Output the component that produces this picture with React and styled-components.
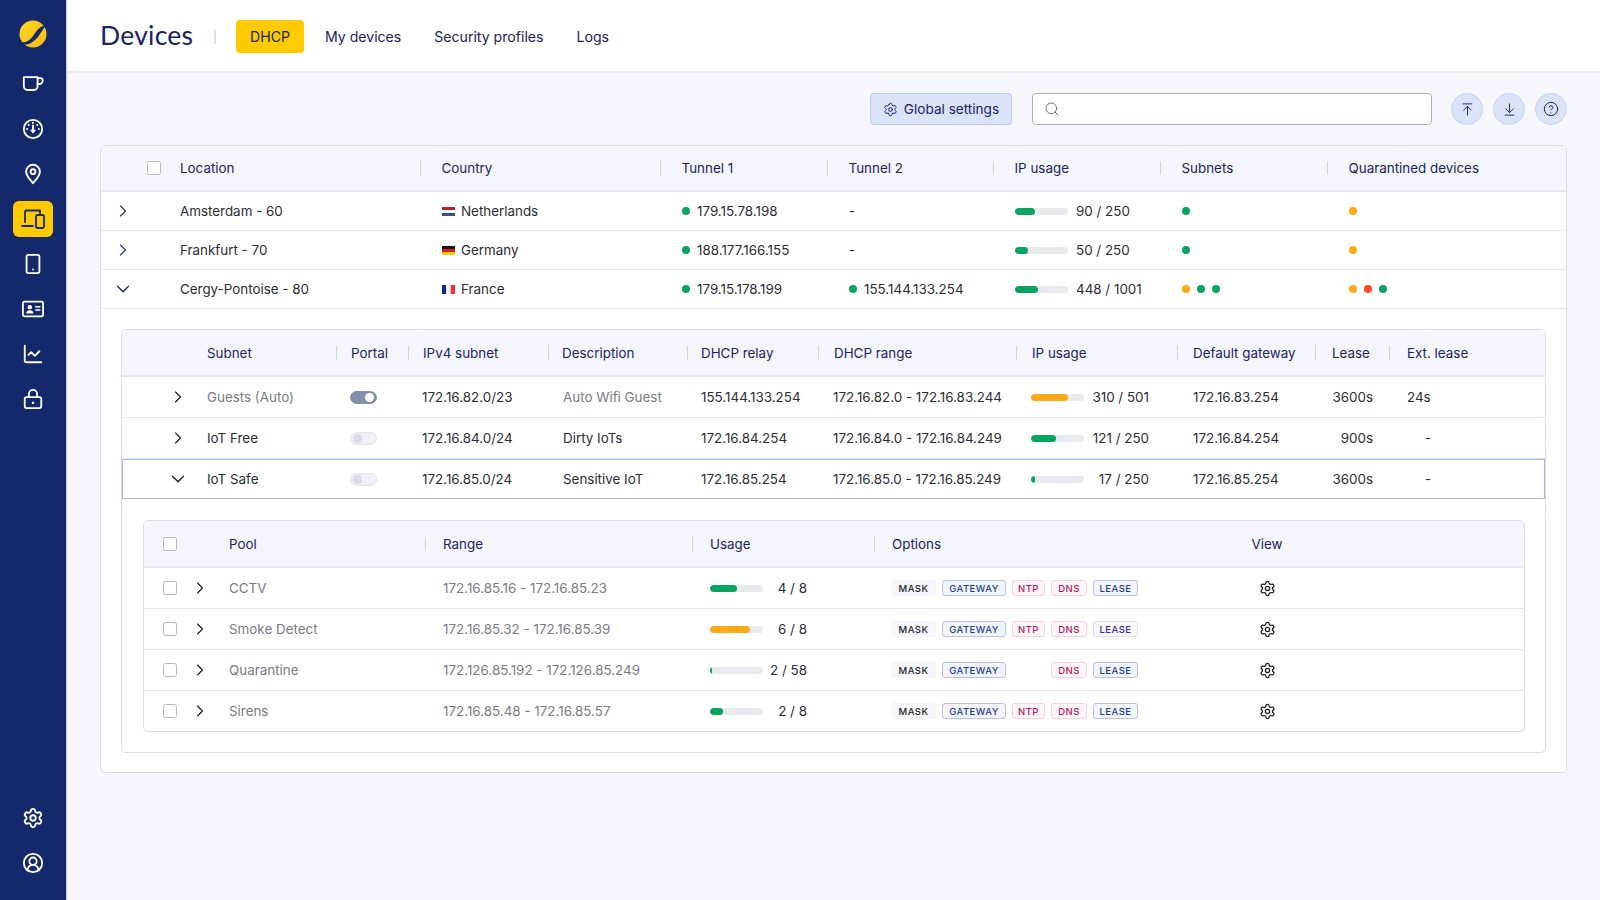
import React from 'react';
import styled, { createGlobalStyle } from 'styled-components';
import {
  Smartphone, ChartLine, Settings, CircleUserRound, Search,
  ArrowUpToLine, ArrowDownToLine, CircleHelp, ChevronRight, ChevronDown,
} from 'lucide-react';

const Global = createGlobalStyle`
  html, body { margin: 0; padding: 0; height: 100%; background: #f6f7fd; }
  body { font-family: Inter, "Liberation Sans", sans-serif; color: #2b2c36; overflow: hidden; }
  * { box-sizing: border-box; }
`;

const Page = styled.div`display: flex; width: 1600px; height: 900px;`;
const Sidebar = styled.aside`
  width: 67px; flex: none; background: #13296b; border-right: 1px solid #c4cbe6;
  display: flex; flex-direction: column; align-items: center; padding: 20px 0 15px;
`;
const Logo = styled.svg`width: 28px; height: 28px; flex: none; margin-bottom: 13px;`;
const NavItem = styled.div`
  width: 40px; height: 45px; display: flex; align-items: center; justify-content: center;
  color: ${p => (p.$active ? '#13296b' : '#fff')}; position: relative; z-index: 0;
  ${p => p.$active && `
    &::before { content: ''; position: absolute; z-index: -1; inset: 5px 0 4px; background: #ffcb00; border-radius: 6px; }
  `}
`;
const Spacer = styled.div`flex: 1;`;
const Main = styled.main`flex: 1; min-width: 0; display: flex; flex-direction: column;`;
const Header = styled.header`
  height: 73px; flex: none; background: #fff; border-bottom: 2px solid #eaecf4;
  display: flex; align-items: center; padding: 2px 0 0 33px;
`;
const Title = styled.h1`
  margin: 0 0 2px; font: 400 26.5px/1 Lato, sans-serif; color: #1a2263; width: 114px; letter-spacing: .25px;
`;
const HeadDivider = styled.span`width: 2px; height: 14px; background: #dfe1ea; margin-right: 20px;`;
const Tabs = styled.nav`display: flex; gap: 7px;`;
const Tab = styled.a`
  height: 33px; display: flex; align-items: center; border-radius: 4px;
  padding: 0 ${p => (p.$active ? 14 : 13)}px; margin-right: ${p => (p.$active ? 1 : 0)}px;
  font-size: 14.1px; color: #1a2263;
  background: ${p => (p.$active ? '#ffcb00' : 'transparent')};
`;
const Content = styled.div`padding: 20px 33px 0 33px;`;
const Toolbar = styled.div`display: flex; justify-content: flex-end; align-items: center; height: 32px; margin-bottom: 20px;`;
const SettingsButton = styled.button`
  width: 142px; height: 32px; border: 1px solid #bcc9f0; border-radius: 4px; background: #dbe3f9;
  display: flex; align-items: center; justify-content: center; gap: 6px; font: 400 13.6px Inter, sans-serif; color: #1a2263;
  padding: 0; margin-right: 20px;
`;
const SearchBox = styled.div`
  width: 400px; height: 32px; border: 1px solid #a9aec2; border-radius: 4px; background: #fff;
  display: flex; align-items: center; padding-left: 11px; color: #6c7186; margin-right: 19px;
`;
const RoundGroup = styled.div`display: flex; gap: 10px;`;
const RoundButton = styled.button`
  width: 32px; height: 32px; border-radius: 50%; border: 1px solid #c5d0f1; background: #dbe3f9;
  display: flex; align-items: center; justify-content: center; color: #1a2263; padding: 0;
`;
const Table = styled.section`
  border: 1px solid #d9ddee; border-radius: 5px; overflow: hidden; background: #fff;
`;
const Row = styled.div`
  display: grid; grid-template-columns: ${p => p.$cols}; align-items: center;
  height: ${p => p.$h}px; border-bottom: ${p => (p.$last ? 0 : 1)}px solid #e4e6f1;
  ${p => p.$selected && 'box-shadow: inset 0 0 0 1px #a3b5f0; border-bottom: 0;'}
`;
const HeadRow = styled(Row)`background: #f5f6fd; border-bottom: 2px solid #e6e8f3;`;
const HeadCell = styled.div`
  display: flex; align-items: center; gap: ${p => p.$gap}px; font-size: 13.4px; color: #1a2263; white-space: nowrap;
  ${p => p.$center && 'justify-content: center;'}
  ${p => p.$lead && `padding-left: ${p.$lead}px;`}
`;
const ColDivider = styled.span`width: 1px; height: 14px; background: #cfd2df; flex: none;`;
const Cell = styled.div`
  padding-left: ${p => p.$pad}px; font-size: 13.4px; white-space: nowrap; display: flex; align-items: center;
  color: ${p => (p.$muted ? '#797b86' : '#2b2c36')};
  ${p => p.$right && `justify-content: flex-end; padding-left: 0; padding-right: ${p.$right}px;`}
  ${p => p.$center && 'justify-content: center; padding-left: 0;'}
`;
const Check = styled.span`
  width: 14px; height: 14px; flex: none; border: 1px solid ${p => (p.$soft ? '#b4b6c6' : '#b6b9d0')}; border-radius: 2.5px; background: #fff;
`;
const Dot = styled.span`
  width: 8px; height: 8px; border-radius: 50%; flex: none;
  background: ${p => ({ g: '#07a55f', o: '#ffa914', r: '#ff4a1f' }[p.$c])};
`;
const Dots = styled.div`display: flex; gap: 7px; align-items: center;`;
const Tunnel = styled.div`display: flex; gap: 7px; align-items: center;`;
const Usage = styled.div`display: flex; align-items: center;`;
const Track = styled.div`width: 53px; height: 7px; border-radius: 4px; background: #e8eaf0; overflow: hidden; flex: none;`;
const Fill = styled.div`height: 100%; border-radius: 4px; background: ${p => (p.$c === 'o' ? '#ffa914' : '#07a55f')};`;
const UsageText = styled.span`
  width: ${p => p.$w}px; margin-left: ${p => p.$ml}px; ${p => p.$end && 'text-align: right;'} flex: none;
`;
const CountryWrap = styled.div`display: flex; align-items: center; gap: 6px;`;
const Expanded = styled.div`padding: 20px 20px 19px;`;
const Nested = styled.div`
  border: 1px solid #d9ddee; border-radius: 5px; overflow: hidden; background: #fff;
`;
const Toggle = styled.span`
  width: 27px; height: 13px; border-radius: 7px; display: flex; align-items: center; padding: 0 2px;
  background: ${p => (p.$on ? '#8490ab' : '#eff0f5')};
  border: 1px solid ${p => (p.$on ? '#8490ab' : '#e2e4ec')};
  justify-content: ${p => (p.$on ? 'flex-end' : 'flex-start')};
`;
const Knob = styled.span`
  width: 9px; height: 9px; border-radius: 50%; background: ${p => (p.$on ? '#fff' : '#d6d9e6')};
`;
const PoolPad = styled.div`padding: 21px 20px 20px 21px;`;
const PoolLead = styled.div`display: flex; align-items: center; padding-left: 19px; gap: 13px;`;
const Badges = styled.div`display: flex; gap: 6px; padding-left: 17px; align-items: center;`;
const Badge = styled.span`
  height: 16px; display: flex; align-items: center; justify-content: center; border-radius: 3px;
  width: ${p => p.$w}px; font-size: 9.5px; font-weight: 500; letter-spacing: .45px;
  visibility: ${p => (p.$hidden ? 'hidden' : 'visible')};
  background: ${p => ({ mask: '#f6f6fb', blue: '#f3f5fd', pink: '#fff6fa', violet: '#f9f8ff' }[p.$k])};
  color: ${p => ({ mask: '#24242e', blue: '#1d3a9c', pink: '#b3145f', violet: '#3a20c4' }[p.$k])};
  border: 1px solid ${p => ({ mask: '#f3f3f9', blue: '#b6c3f0', pink: '#fbd0e3', violet: '#dfdcf8' }[p.$k])};
`;

const Cup = () => (
  <svg width="22" height="22" viewBox="0 0 24 24" fill="none" stroke="currentColor" strokeWidth="2" strokeLinejoin="round" strokeLinecap="round">
    <path d="M2 4.500h15v10a4 4 0 0 1-4 4H6a4 4 0 0 1-4-4z" />
    <path d="M17 5.500h3a2.500 2.500 0 0 1 2.500 2.500v.5a3.500 3.500 0 0 1-3.500 3.500h-2" />
  </svg>
);
const Gauge = () => (
  <svg width="22" height="22" viewBox="0 0 24 24" fill="none" stroke="currentColor" strokeWidth="2" strokeLinecap="round">
    <circle cx="12" cy="12" r="10" />
    <path d="M12 8v7" />
    <path d="M9.800 13.500 12 16.500l2.200-3z" fill="currentColor" strokeWidth="1" />
    <path d="M12 5.200v.01M7.400 7.600v.01M16.600 7.600v.01M5.600 12v.01M18.400 12v.01" strokeWidth="2.200" />
  </svg>
);
const Pin = () => (
  <svg width="22" height="22" viewBox="0 0 24 24" fill="none" stroke="currentColor" strokeWidth="2.100" strokeLinejoin="round">
    <path d="M12 22C9 18.500 4.500 14 4.500 9.500a7.500 7.500 0 0 1 15 0C19.500 14 15 18.500 12 22z" />
    <circle cx="12" cy="9.500" r="2.600" />
  </svg>
);
const Devices = () => (
  <svg width="24" height="24" viewBox="0 0 24 24" fill="none" stroke="currentColor" strokeWidth="1.800" strokeLinecap="round" strokeLinejoin="round">
    <path d="M4 15V5a1.500 1.500 0 0 1 1.500-1.500H19v3" />
    <path d="M1 19h11" />
    <rect x="15" y="8" width="8" height="13" rx="1.500" />
  </svg>
);
const IdCard = () => (
  <svg width="22" height="22" viewBox="0 0 24 24" fill="none" stroke="currentColor" strokeWidth="2" strokeLinecap="round">
    <rect x="1" y="4" width="22" height="16" rx="2" />
    <circle cx="8.500" cy="10" r="2.400" fill="currentColor" stroke="none" />
    <path d="M4.600 17c0-2.500 1.700-3.600 3.900-3.600s3.900 1.100 3.900 3.600z" fill="currentColor" stroke="none" />
    <path d="M15 9.500h4.500M15 13h4.500" strokeWidth="1.700" />
  </svg>
);
const LockIcon = () => (
  <svg width="22" height="22" viewBox="0 0 24 24" fill="none" stroke="currentColor" strokeWidth="2" strokeLinejoin="round">
    <rect x="3" y="10" width="18" height="12" rx="2" />
    <path d="M7.500 10V6.500a4.500 4.500 0 0 1 9 0V10" />
    <path d="M12 15v2.500" strokeWidth="2.400" />
  </svg>
);
const Flag = ({ c }) => {
  const v = c === 'fr';
  const colors = { nl: ['#b3232e', '#fff', '#2f4f96'], de: ['#111', '#d8201f', '#ffcc00'], fr: ['#12288c', '#fff', '#f5303f'] }[c];
  return (
    <svg width="13" height="9" viewBox="0 0 13 9" style={{ flex: 'none' }}>
      {colors.map((col, i) => v
        ? <rect key={i} x={(i * 13) / 3} y="0" width={13 / 3} height="9" fill={col} />
        : <rect key={i} x="0" y={i * 3} width="13" height="3" fill={col} />)}
    </svg>
  );
};
const Chev = ({ open, color }) => (open
  ? <ChevronDown size={22} strokeWidth={1.4} color={color} />
  : <ChevronRight size={20} strokeWidth={1.4} color={color} />);
const Bar = ({ pct, c }) => (
  <Track><Fill $c={c} style={{ width: `${pct}%` }} /></Track>
);

const MAIN = '79px 240px 240px 167px 166px 167px 167px 1fr';
const SUB = '85px 129px 72px 140px 139px 131px 198px 161px 138px 74px 1fr';
const POOL = '85px 196px 267px 182px 360px 66px 1fr';

const mainHead = ['Location', 'Country', 'Tunnel 1', 'Tunnel 2', 'IP usage', 'Subnets', 'Quarantined devices'];
const subHead = ['Subnet', 'Portal', 'IPv4 subnet', 'Description', 'DHCP relay', 'DHCP range', 'IP usage', 'Default gateway', 'Lease', 'Ext. lease'];
const subGaps = [0, 14, 14, 13, 13, 15, 15, 15, 16, 17];
const locations = [
  { name: 'Amsterdam - 60', flag: 'nl', country: 'Netherlands', t1: '179.15.78.198', t2: null, pct: 37, use: '90 / 250', subs: ['g'], q: ['o'], chev: '#2a2f7a' },
  { name: 'Frankfurt - 70', flag: 'de', country: 'Germany', t1: '188.177.166.155', t2: null, pct: 24, use: '50 / 250', subs: ['g'], q: ['o'], chev: '#1f3f8f' },
  { name: 'Cergy-Pontoise - 80', flag: 'fr', country: 'France', t1: '179.15.178.199', t2: '155.144.133.254', pct: 44, use: '448 / 1001', subs: ['o', 'g', 'g'], q: ['o', 'r', 'g'], open: true, chev: '#1a2263' },
];
const subnets = [
  { name: 'Guests (Auto)', muted: true, on: true, ip: '172.16.82.0/23', desc: 'Auto Wifi Guest', descMuted: true, relay: '155.144.133.254', range: '172.16.82.0 - 172.16.83.244', pct: 70, c: 'o', use: '310 / 501', gw: '172.16.83.254', lease: '3600s', ext: '24s' },
  { name: 'IoT Free', ip: '172.16.84.0/24', desc: 'Dirty IoTs', relay: '172.16.84.254', range: '172.16.84.0 - 172.16.84.249', pct: 48, c: 'g', use: '121 / 250', gw: '172.16.84.254', lease: '900s', ext: '-' },
  { name: 'IoT Safe', selected: true, open: true, ip: '172.16.85.0/24', desc: 'Sensitive IoT', relay: '172.16.85.254', range: '172.16.85.0 - 172.16.85.249', pct: 7, c: 'g', use: '17 / 250', gw: '172.16.85.254', lease: '3600s', ext: '-' },
];
const pools = [
  { name: 'CCTV', range: '172.16.85.16 - 172.16.85.23', pct: 50, c: 'g', use: '4 / 8', lease: 'blue' },
  { name: 'Smoke Detect', range: '172.16.85.32 - 172.16.85.39', pct: 75, c: 'o', use: '6 / 8', lease: 'violet' },
  { name: 'Quarantine', range: '172.126.85.192 - 172.126.85.249', pct: 4, c: 'g', use: '2 / 58', lease: 'blue', noNtp: true },
  { name: 'Sirens', range: '172.16.85.48 - 172.16.85.57', pct: 25, c: 'g', use: '2 / 8', lease: 'blue' },
];

export default function App() {
  return (
    <>
      <Global />
      <Page>
        <Sidebar>
          <Logo viewBox="0 0 28 28">
            <defs>
              <linearGradient id="logoFill" x1="0" y1="0" x2="1" y2="1">
                <stop offset="0" stopColor="#ffd725" />
                <stop offset="1" stopColor="#fbbb0c" />
              </linearGradient>
            </defs>
            <circle cx="14" cy="14" r="13.500" fill="url(#logoFill)" />
            <path d="M2.500 22.500C8.500 22.500 12 19 15 14.500 18 10 21.500 6 27 5 24.500 8.500 22 12.500 19 17 15 22 9 25.500 4 24.500z" fill="#13296b" />
          </Logo>
          <NavItem><Cup /></NavItem>
          <NavItem><Gauge /></NavItem>
          <NavItem><Pin /></NavItem>
          <NavItem $active><Devices /></NavItem>
          <NavItem><Smartphone size={22} strokeWidth={2} /></NavItem>
          <NavItem><IdCard /></NavItem>
          <NavItem><ChartLine size={22} strokeWidth={2} /></NavItem>
          <NavItem><LockIcon /></NavItem>
          <Spacer />
          <NavItem><Settings size={22} strokeWidth={2} /></NavItem>
          <NavItem><CircleUserRound size={22} strokeWidth={2} /></NavItem>
        </Sidebar>
        <Main>
          <Header>
            <Title>Devices</Title>
            <HeadDivider />
            <Tabs>
              <Tab $active>DHCP</Tab>
              <Tab>My devices</Tab>
              <Tab>Security profiles</Tab>
              <Tab>Logs</Tab>
            </Tabs>
          </Header>
          <Content>
            <Toolbar>
              <SettingsButton><Settings size={15} strokeWidth={1.6} />Global settings</SettingsButton>
              <SearchBox><Search size={16} strokeWidth={1.5} /></SearchBox>
              <RoundGroup>
                <RoundButton><ArrowUpToLine size={15} strokeWidth={1.5} /></RoundButton>
                <RoundButton><ArrowDownToLine size={15} strokeWidth={1.5} /></RoundButton>
                <RoundButton><CircleHelp size={16} strokeWidth={1.5} /></RoundButton>
              </RoundGroup>
            </Toolbar>
            <Table>
              <HeadRow $cols={MAIN} $h={46}>
                <HeadCell $lead={46}><Check /></HeadCell>
                {mainHead.map((h, i) => (
                  <HeadCell key={h} $gap={20.5}>{i > 0 && <ColDivider />}{h}</HeadCell>
                ))}
              </HeadRow>
              {locations.map(l => (
                <Row key={l.name} $cols={MAIN} $h={39}>
                  <Cell $pad={l.open ? 11 : 12}><Chev open={l.open} color={l.chev} /></Cell>
                  <Cell $pad={0}>{l.name}</Cell>
                  <Cell $pad={22}><CountryWrap><Flag c={l.flag} />{l.country}</CountryWrap></Cell>
                  <Cell $pad={22}><Tunnel><Dot $c="g" />{l.t1}</Tunnel></Cell>
                  <Cell $pad={22}>{l.t2 ? <Tunnel><Dot $c="g" />{l.t2}</Tunnel> : '-'}</Cell>
                  <Cell $pad={22}><Usage><Bar pct={l.pct} /><UsageText $ml={8} $w={80}>{l.use}</UsageText></Usage></Cell>
                  <Cell $pad={22}><Dots>{l.subs.map((c, i) => <Dot key={i} $c={c} />)}</Dots></Cell>
                  <Cell $pad={22}><Dots>{l.q.map((c, i) => <Dot key={i} $c={c} />)}</Dots></Cell>
                </Row>
              ))}
              <Expanded>
                <Nested>
                  <HeadRow $cols={SUB} $h={47}>
                    <div />
                    {subHead.map((h, i) => (
                      <HeadCell key={h} $gap={subGaps[i]}>{i > 0 && <ColDivider />}{h}</HeadCell>
                    ))}
                  </HeadRow>
                  {subnets.map(s => (
                    <Row key={s.name} $cols={SUB} $h={s.selected ? 40 : 41} $selected={s.selected}>
                      <Cell $pad={s.open ? 45 : 46}><Chev open={s.open} color="#1c1c24" /></Cell>
                      <Cell $pad={0} $muted={s.muted}>{s.name}</Cell>
                      <Cell $pad={14}><Toggle $on={s.on}><Knob $on={s.on} /></Toggle></Cell>
                      <Cell $pad={14}>{s.ip}</Cell>
                      <Cell $pad={15} $muted={s.descMuted}>{s.desc}</Cell>
                      <Cell $pad={14}>{s.relay}</Cell>
                      <Cell $pad={15}>{s.range}</Cell>
                      <Cell $pad={15}><Usage><Bar pct={s.pct} c={s.c} /><UsageText $ml={6} $w={59} $end>{s.use}</UsageText></Usage></Cell>
                      <Cell $pad={16}>{s.gw}</Cell>
                      <Cell $right={16}>{s.lease}</Cell>
                      <Cell $pad={s.ext === '-' ? 36 : 18}>{s.ext}</Cell>
                    </Row>
                  ))}
                  <PoolPad>
                    <Nested>
                      <HeadRow $cols={POOL} $h={47}>
                        <PoolLead><Check $soft /></PoolLead>
                        <HeadCell>Pool</HeadCell>
                        <HeadCell $gap={17}><ColDivider />Range</HeadCell>
                        <HeadCell $gap={17}><ColDivider />Usage</HeadCell>
                        <HeadCell $gap={17}><ColDivider />Options</HeadCell>
                        <HeadCell $center>View</HeadCell>
                        <div />
                      </HeadRow>
                      {pools.map((p, i) => {
                        const last = i === pools.length - 1;
                        return (
                          <Row key={p.name} $cols={POOL} $h={last ? 40 : 41} $last={last}>
                            <PoolLead><Check $soft /><Chev color="#1c1c24" /></PoolLead>
                            <Cell $pad={0} $muted>{p.name}</Cell>
                            <Cell $pad={18} $muted>{p.range}</Cell>
                            <Cell $pad={18}><Usage><Bar pct={p.pct} c={p.c} /><UsageText $ml={6} $w={38} $end>{p.use}</UsageText></Usage></Cell>
                            <Badges>
                              <Badge $k="mask" $w={45}>MASK</Badge>
                              <Badge $k="blue" $w={64}>GATEWAY</Badge>
                              <Badge $k="pink" $w={33} $hidden={p.noNtp}>NTP</Badge>
                              <Badge $k="pink" $w={36}>DNS</Badge>
                              <Badge $k={p.lease} $w={45}>LEASE</Badge>
                            </Badges>
                            <Cell $center><Settings size={17} strokeWidth={1.8} color="#1c1c24" /></Cell>
                            <div />
                          </Row>
                        );
                      })}
                    </Nested>
                  </PoolPad>
                </Nested>
              </Expanded>
            </Table>
          </Content>
        </Main>
      </Page>
    </>
  );
}
